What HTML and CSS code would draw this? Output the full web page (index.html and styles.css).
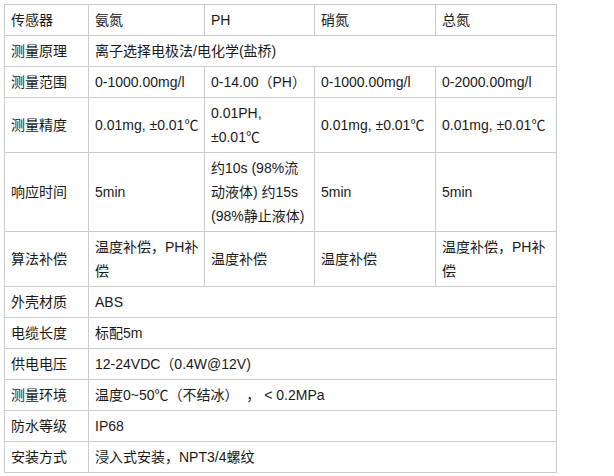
FILE: index.html
```html
<!DOCTYPE html>
<html lang="zh">
<head>
<meta charset="utf-8">
<link rel="stylesheet" href="styles.css">
</head>
<body>
<div class="wrap">
<table class="spec">
  <colgroup>
    <col class="c1"><col class="c2"><col class="c3"><col class="c4"><col class="c5">
  </colgroup>
  <tr><td>传感器</td><td>氨氮</td><td>PH</td><td>硝氮</td><td>总氮</td></tr>
  <tr><td>测量原理</td><td colspan="4">离子选择电极法/电化学(盐桥)</td></tr>
  <tr><td>测量范围</td><td>0-1000.00mg/l</td><td>0-14.00（PH）</td><td>0-1000.00mg/l</td><td>0-2000.00mg/l</td></tr>
  <tr><td>测量精度</td><td>0.01mg, ±0.01℃</td><td>0.01PH,<br>±0.01℃</td><td>0.01mg, ±0.01℃</td><td>0.01mg, ±0.01℃</td></tr>
  <tr><td>响应时间</td><td>5min</td><td>约10s (98%流<br>动液体) 约15s<br>(98%静止液体)</td><td>5min</td><td>5min</td></tr>
  <tr><td>算法补偿</td><td>温度补偿，PH补<br>偿</td><td>温度补偿</td><td>温度补偿</td><td>温度补偿，PH补<br>偿</td></tr>
  <tr><td>外壳材质</td><td colspan="4">ABS</td></tr>
  <tr><td>电缆长度</td><td colspan="4">标配5m</td></tr>
  <tr><td>供电电压</td><td colspan="4">12-24VDC（0.4W@12V)</td></tr>
  <tr><td>测量环境</td><td colspan="4">温度0~50℃（不结冰）&nbsp;&nbsp;，&nbsp;&lt; 0.2MPa</td></tr>
  <tr><td>防水等级</td><td colspan="4">IP68</td></tr>
  <tr><td>安装方式</td><td colspan="4">浸入式安装，NPT3/4螺纹</td></tr>
</table>
</div>
</body>
</html>
```
FILE: styles.css
```css
html, body {
  margin: 0;
  padding: 0;
  background: #fff;
}
.wrap {
  padding: 4px;
}
.spec {
  border-collapse: collapse;
  table-layout: fixed;
  width: 553px;
  font-family: "Liberation Sans", "Noto Sans CJK SC", sans-serif;
  font-size: 14px;
  line-height: 24px;
  color: #1a1a1a;
}
.c1 { width: 84px; }
.c2 { width: 116px; }
.c3 { width: 110px; }
.c4 { width: 121px; }
.c5 { width: 121px; }
.spec td {
  border: 1px solid #ccc;
  padding: 3px 6px;
  vertical-align: middle;
  white-space: nowrap;
  overflow: hidden;
}
```
